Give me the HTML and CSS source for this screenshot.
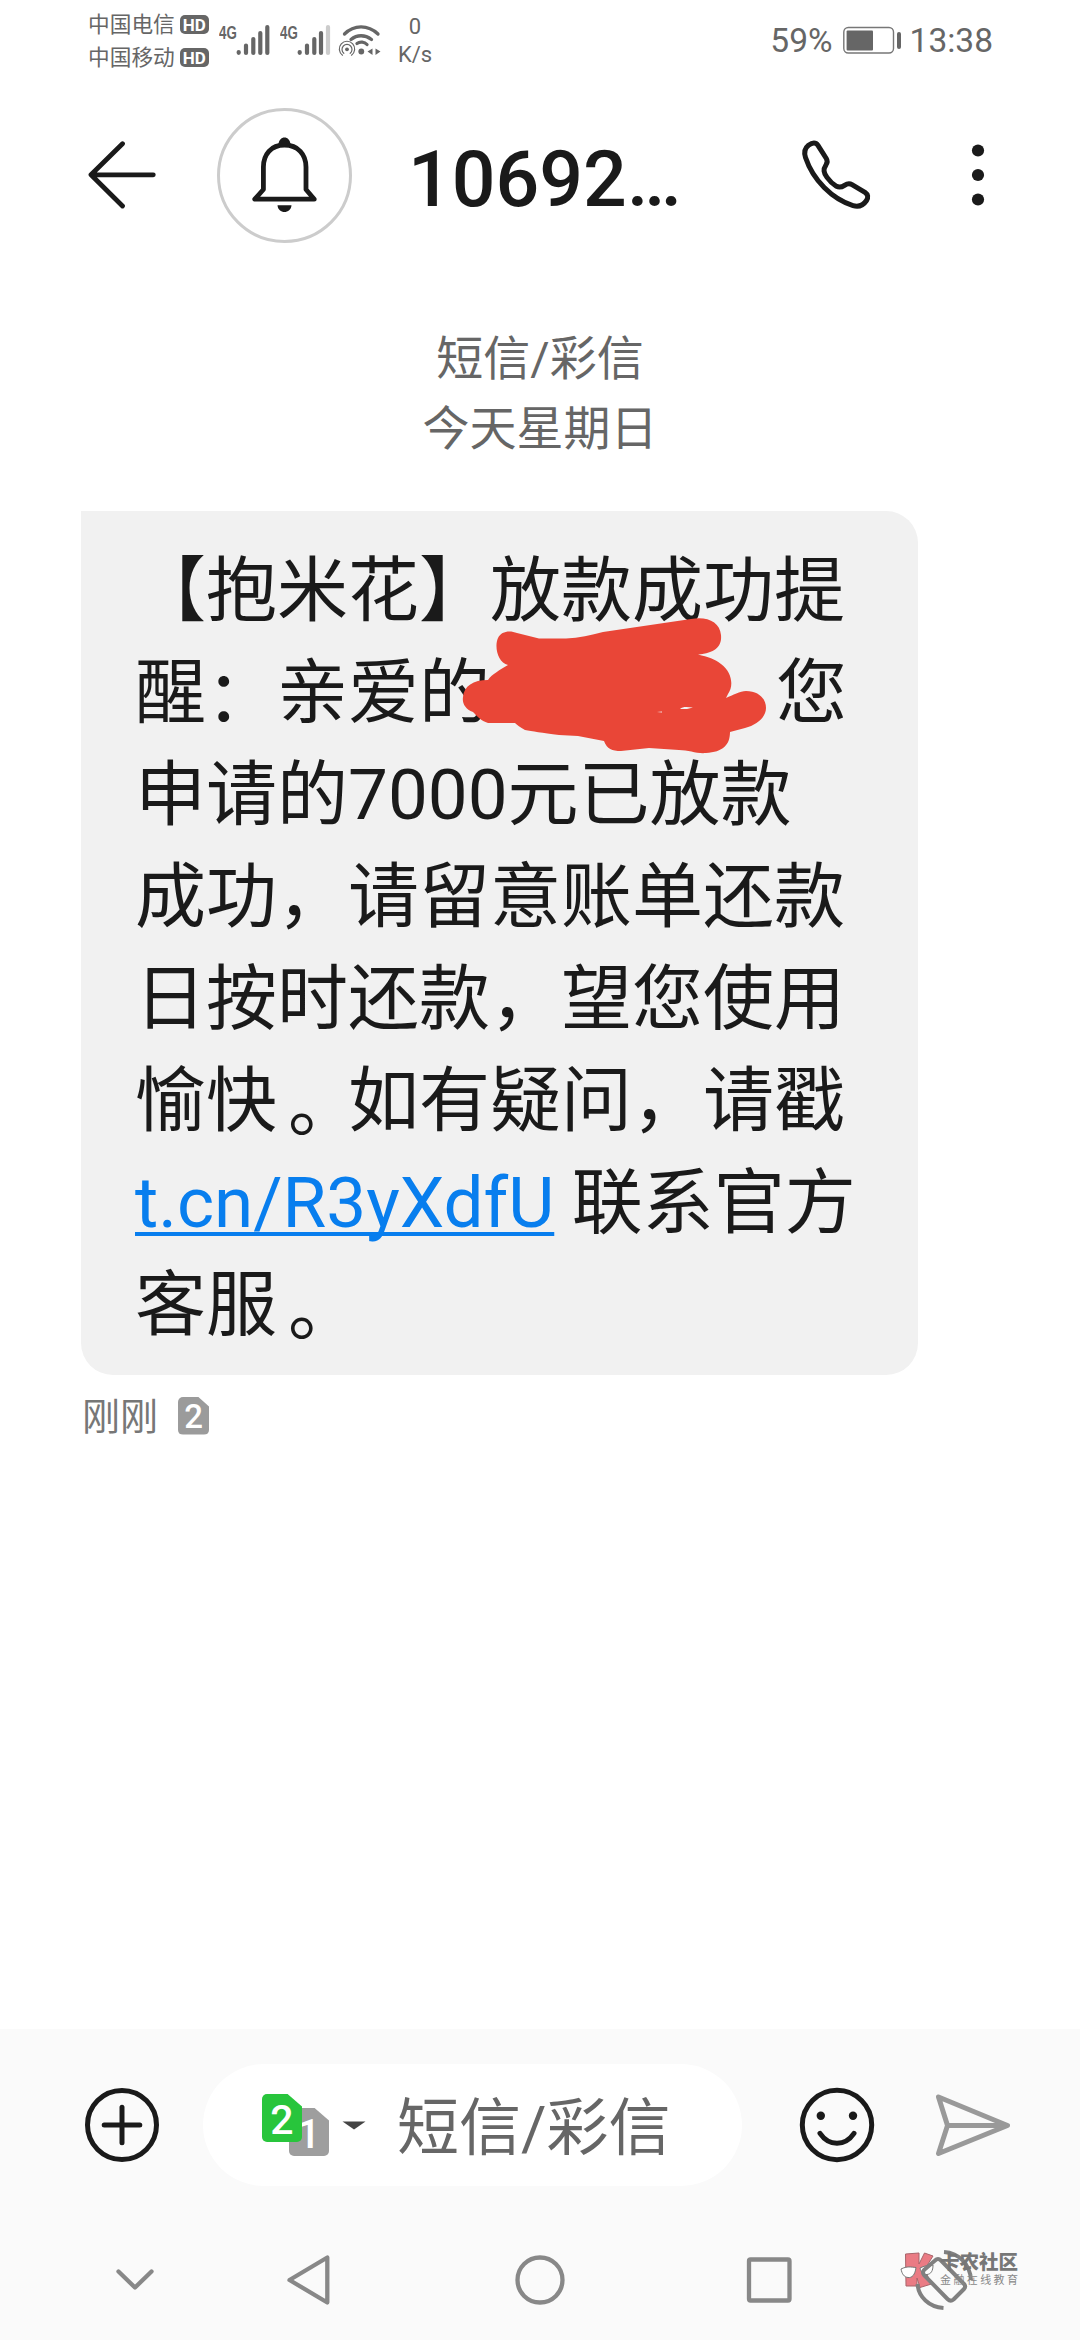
FILE: index.html
```html
<!DOCTYPE html>
<html lang="zh-CN">
<head>
<meta charset="utf-8">
<title>短信</title>
<link rel="stylesheet" href="styles.css">
</head>
<body>
<div class="status">
  <div class="carriers">
    <div class="carrier"><span>中国电信</span><b class="hd">HD</b></div>
    <div class="carrier"><span>中国移动</span><b class="hd">HD</b></div>
  </div>
  <div class="signal">
    <span class="gen">4G</span>
    <svg width="34" height="32" viewBox="236 24 34 32" stroke="#666" stroke-width="4.2" stroke-linecap="round"><path d="M238.7 52v.8M246 45.500V53M253.300 39V53M260.300 33V53M267.300 27V53"/></svg>
  </div>
  <div class="signal second">
    <span class="gen">4G</span>
    <svg width="34" height="32" viewBox="297 24 34 32" stroke="#666" stroke-width="4.2" stroke-linecap="round"><path d="M299.700 52v.8M307 45.500V53M314.300 39V53M321 33V53"/><path d="M328 27V53" stroke="#ccc"/></svg>
  </div>
  <svg class="wifi" width="44" height="34" viewBox="337 23 44 34" fill="none" stroke="#666" stroke-linecap="round">
    <path stroke-width="3.300" d="M344.500 34C354 24.500 368 24.500 378 34M351 39.500C357 34.500 365 34.500 371.500 39.500M357 43.500C360 41.300 364.500 41.800 367 44.500"/>
    <circle cx="361.300" cy="51.500" r="2.900" fill="#666" stroke="none"/>
    <circle cx="347" cy="49.300" r="1.900" fill="#666" stroke="none"/>
    <path stroke-width="1.200" d="M343.800 53.300A5 5 0 1 1 350.200 53.300M342.500 55.200A7.700 7.700 0 1 1 351.500 55.200"/>
    <path d="M372.500 48.500v6.500l-5-3.500zM375.500 48.500v6.500l5-3.500z" fill="#666" stroke="none"/>
  </svg>
  <div class="speed"><span>0</span><span>K/s</span></div>
  <div class="status-right">
    <span class="pct">59%</span>
    <svg width="60" height="30" viewBox="842 26 60 30"><rect x="843.800" y="27.500" width="49.700" height="25.500" rx="4.500" fill="none" stroke="#777" stroke-width="1.400"/><rect x="846.600" y="30.500" width="26.400" height="20" rx="1" fill="#666"/><rect x="897" y="32" width="4" height="17" rx="2" fill="#666"/></svg>
    <span class="clock">13:38</span>
  </div>
</div>

<div class="header">
  <svg class="back" width="68" height="68" viewBox="88 141 68 68" fill="none" stroke="#1a1a1a" stroke-width="4.800" stroke-linecap="round" stroke-linejoin="round"><path d="M153.300 174.800H91M122.500 143.800L91 174.800L122.500 206"/></svg>
  <div class="avatar">
    <svg width="68" height="78" viewBox="251 136 68 78">
      <path fill="none" stroke="#1a1a1a" stroke-width="4.800" stroke-linejoin="round" d="M284.500 145C271 145 263.400 154.500 263.400 167V189.500L254.800 199.200H314.300L306 189.500V167C306 154.500 298 145 284.500 145Z"/>
      <path fill="#1a1a1a" d="M278.500 145C278.500 135 290.500 135 290.500 145ZM277.500 205.200H291.500C291 214.200 278 214.200 277.500 205.200Z"/>
    </svg>
  </div>
  <div class="title">10692…</div>
  <svg class="call" width="72" height="72" viewBox="799 139 72 72" fill="none" stroke="#1a1a1a" stroke-width="5" stroke-linejoin="round"><path d="M816.800 145.200L825.300 158.500C826.900 161 826.300 162.700 825 164.800C822 169.400 822.500 172.500 826 177.400C828.500 181 832 184.200 835.500 186.300C838.300 187.800 840.500 187.300 843.500 185.300C846.500 183.300 848.500 183.100 851 184.600L864 192.300C867 194.300 867.500 197.500 865.500 200.500C862 205.700 857.500 207.200 852 205.600C831 199 812 180 804.500 157.500C802.700 152 803.500 148.500 807.500 145.300C811.500 142.400 814.800 142.300 816.800 145.200Z"/></svg>
  <svg class="more" width="14" height="64" viewBox="0 0 14 64" fill="#1a1a1a"><circle cx="7" cy="7.500" r="6.100"/><circle cx="7" cy="32" r="6.100"/><circle cx="7" cy="56.500" r="6.100"/></svg>
</div>

<div class="thread">
  <div class="day"><div>短信/彩信</div><div>今天星期日</div></div>
  <div class="bubble">
    <div class="line">【抱米花】放款成功提</div>
    <div class="line">醒<span class="colon">：</span>亲爱的<span class="hidden-name"><svg class="scribble" width="306" height="140" viewBox="460 615 306 140"><path fill="#e94637" d="M497 637C500 630 509 629 516 632L538 637.500H565C578 637 590 634 602 631L690 618C706 615 719 621 720 634C721 645 715 652 697 653.500C707 656 714 658 720 663C731 671 733 685 727 693L725 697C732 694 739 690 745 690C758 690 765 698 765 707C765 716 756 724 744 727L729 731C729 744 722 751 705 752C696 753 688 749 678 749L648 747L620 750C611 750 606 748 603 740L577 735L558 734C541 732 531 730 524 729C519 726 516 724 514 722H487C480 720 476 715 472 711C464 708 461 702 462 696C463 685 472 679 487 679C491 673 499 669 507 664C497 662 493 646 497 637Z"/><path fill="#f1f1f1" d="M679 708C682 705 687 706 692 706.500L686 708ZM656 711L661 710.600V711.400Z"/></svg></span>您</div>
    <div class="line">申请的7000元已放款</div>
    <div class="line">成功，请留意账单还款</div>
    <div class="line">日按时还款，望您使用</div>
    <div class="line">愉快<span class="stop">。</span>如有疑问，请戳</div>
    <div class="line"><a class="link">t.cn/R3yXdfU</a> 联系官方</div>
    <div class="line">客服<span class="stop">。</span></div>
  </div>
  <div class="meta">
    <span>刚刚</span>
    <span class="sim sim-meta">2</span>
  </div>
</div>

<div class="composer">
  <svg class="plus" width="76" height="76" viewBox="-38 -38 76 76" fill="none" stroke="#1a1a1a" stroke-width="5" stroke-linecap="round"><circle r="34.500"/><path d="M-17.800 0H17.800M0-17.800V17.800"/></svg>
  <div class="field">
    <div class="sims"><span class="sim sim-one">1</span><span class="sim sim-two">2</span></div>
    <svg class="caret" width="24" height="9" viewBox="0 0 24 9"><path d="M.5.5H23.500L12 8.500Z" fill="#444"/></svg>
    <span>短信/彩信</span>
  </div>
  <svg class="smile" width="76" height="76" viewBox="-38 -38 76 76" fill="none" stroke="#1a1a1a" stroke-width="5" stroke-linecap="round"><circle r="34.700"/><path d="M-17 8.300C-8 21.500 8 21.500 17 8.300"/><g fill="#1a1a1a" stroke="none"><circle cx="-16.200" cy="-9.200" r="4.200"/><circle cx="16" cy="-9.200" r="4.200"/></g></svg>
  <svg class="send" width="76" height="64" viewBox="934 2093 76 64" fill="none" stroke="#999" stroke-width="5" stroke-linecap="round" stroke-linejoin="round"><path d="M937.500 2097L1006.500 2125.500L937.500 2153.500L946.500 2125.500ZM946.500 2125.500H1006"/></svg>
</div>

<div class="nav">
  <svg width="900" height="60" viewBox="110 2250 900 60" fill="none" stroke="#888" stroke-width="4.300" stroke-linecap="round" stroke-linejoin="round">
    <path d="M118.500 2271.500L135 2287.500L151.500 2271.500"/>
    <path d="M289.500 2280L327.300 2257.500V2302.500Z"/>
    <circle cx="540" cy="2280" r="22.500"/>
    <rect x="749" y="2259.500" width="40.500" height="41" rx="1.500"/>
  </svg>
  <div class="brand">
    <svg width="76" height="64" viewBox="898 2248 76 64" fill="none">
      <path d="M905.500 2254L919 2253V2264L924.500 2253L933 2256L924.500 2269.500L931.500 2284L920 2287.500L917 2278V2286H906Z" fill="#ea7b84" stroke="#a8656b" stroke-width="1"/>
      <path d="M901 2269C907 2266 911 2267 916 2267.500C915 2275 912 2278 908 2277.500C904 2277 902 2274 901 2269ZM920 2268C924 2266 928 2265 933 2265C933 2271 931 2274 927 2274.500C923 2275 921 2272 920 2268Z" fill="#fff" stroke="#777" stroke-width="1"/>
      <g stroke="#808080" stroke-width="4" stroke-linejoin="round"><path d="M935 2260.500Q938 2257.500 941 2260.500L964.500 2284.500Q966 2287 964 2289L953.500 2299.500Q950.500 2302 947.500 2299L924 2275Q922 2272.500 924 2270Z"/><path d="M944 2252C959 2253 970 2264 971 2280M917.500 2284C918.500 2297 929 2307 943.500 2308"/></g>
    </svg>
    <div class="brand-text"><b>卡农社区</b><span>金融在线教育</span></div>
  </div>
</div>
</body>
</html>
```
FILE: styles.css
```css
* { box-sizing: border-box; }
body {
  margin: 0;
  width: 1080px;
  height: 2340px;
  display: flex;
  flex-direction: column;
  background: #fff;
  color: #1a1a1a;
  font-family: Roboto, "Noto Sans CJK SC", sans-serif;
  text-spacing-trim: space-all;
  overflow: hidden;
}
svg { display: block; flex: none; }

.status { height: 90px; display: flex; align-items: flex-start; padding: 0 87px 0 88px; color: #666; }
.carriers { width: 122px; margin-right: 9px; padding-top: 8px; font-size: 21.7px; }
.carrier { display: flex; align-items: center; gap: 5px; height: 33px; line-height: 33px; white-space: nowrap; }
.hd { width: 29px; height: 19px; border-radius: 5px; background: #666; color: #fff; font-size: 17px; line-height: 20px; text-align: center; }
.signal { display: flex; width: 51px; padding-top: 24px; }
.signal.second { margin-left: 10px; }
.gen { width: 17px; padding-top: 1px; font: 700 19px/15px "Liberation Sans", sans-serif; transform: scaleX(.7); transform-origin: left; }
.wifi { margin: 23px 0 0 6px; }
.speed { display: flex; flex-direction: column; align-items: center; width: 36px; margin-left: 16px; padding-top: 13px; font-size: 22px; line-height: 28px; }
.status-right { display: flex; margin-left: auto; padding-top: 22px; font-size: 33.500px; line-height: 38px; }
.status-right svg { margin: 4px 8px 0 9px; }

.header { height: 170px; display: flex; align-items: center; padding: 0 95px 0 88px; }
.avatar { display: flex; align-items: center; justify-content: center; width: 135px; height: 135px; margin-left: 61px; border: 3.500px solid #ccc; border-radius: 50%; }
.title { width: 392px; margin-left: 56px; padding-top: 10px; font-size: 77px; font-weight: 500; line-height: 90px; }
.more { margin-left: auto; }

.thread { flex: 1; padding: 0 81px; }
.day { padding-top: 64px; font-size: 47px; line-height: 70px; color: #666; text-align: center; }
.bubble { width: 837px; height: 864px; margin-top: 47px; padding: 29px 54px 19px; border-radius: 0 32px 32px 32px; background: #f1f1f1; }
.line { height: 102px; font-size: 71px; line-height: 102px; white-space: nowrap; }
.stop { display: inline-block; width: 71px; text-indent: 11px; line-height: 1; vertical-align: -5px; }
.colon { display: inline-block; width: 71px; line-height: 1; vertical-align: -4px; }
.hidden-name { display: inline-block; position: relative; width: 286px; height: 50px; }
.scribble { position: absolute; left: -29px; top: -51px; }
.link { color: #087eee; text-decoration: underline; text-decoration-thickness: 4px; text-underline-offset: 5px; text-decoration-skip-ink: none; }
.meta { display: flex; align-items: center; padding: 14px 1px; font-size: 38px; line-height: 56px; color: #777; }

.sim { display: block; color: #fff; text-align: center; font-weight: 500; clip-path: polygon(2px 0, 64% 0, 100% 26%, 100% 95%, 95% 100%, 5% 100%, 0 95%, 0 5%); border-radius: 5px; }
.sim-meta { width: 31px; height: 38px; margin: -3px 0 0 20px; background: #9b9b9b; font-size: 33px; line-height: 40px; }

.composer { height: 192px; display: flex; align-items: center; padding: 0 69px 0 84px; background: #fafafa; }
.field { display: flex; align-items: center; width: 539px; height: 122px; margin-left: 43px; padding-left: 59px; border-radius: 61px; background: #fff; color: #666; font-size: 62px; line-height: 80px; }
.field > span { margin-left: 31px; padding-top: 7px; }
.sims { position: relative; width: 68px; height: 62px; }
.sims .sim { position: absolute; width: 40px; height: 48px; font-size: 41px; line-height: 52px; }
.sims .sim-one { left: 27px; top: 14px; background: #9e9e9e; }
.sims .sim-two { left: 0; top: 0; background: #28c53c; }
.caret { margin-left: 12px; }
.smile { margin-left: 57px; }
.send { margin-left: auto; }

.nav { position: relative; height: 119px; padding: 29px 0 0 110px; background: #fafafa; }
.brand { position: absolute; left: 898px; top: 27px; }
.brand-text { position: absolute; left: 42px; top: 4px; display: flex; flex-direction: column; white-space: nowrap; color: #777; }
.brand-text b { font-size: 19.500px; font-weight: 900; line-height: 22px; }
.brand-text span { font-size: 11px; letter-spacing: 2.400px; line-height: 16px; margin-top: -1px; color: #888; }
```
